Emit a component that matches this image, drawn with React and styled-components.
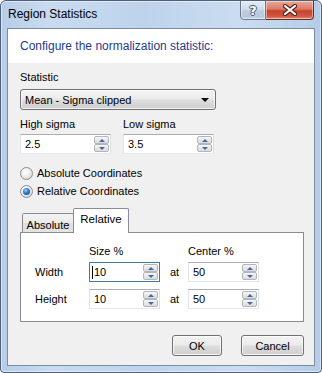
import React from 'react';
import styled, { createGlobalStyle, css } from 'styled-components';

const GlobalStyle = createGlobalStyle`
  html, body {
    margin: 0;
    padding: 0;
  }
  body {
    font-family: "Liberation Sans", Arial, sans-serif;
    font-size: 11px;
    color: #000;
    background: #fff;
  }
  * { box-sizing: border-box; }
`;

const win7Button = css`
  border: 1px solid #707070;
  border-radius: 3px;
  background: linear-gradient(to bottom, #f2f2f2 0%, #ebebeb 48%, #dddddd 52%, #cfcfcf 100%);
  box-shadow: inset 0 0 0 1px rgba(255, 255, 255, 0.75);
`;

let Window = styled.div`
  width: 322px;
  height: 373px;
  border: 1px solid #50607a;
  border-radius: 6px 6px 4px 4px;
  background: linear-gradient(to right, #b7cde7 0%, #c8dbf0 15%, #bed3eb 45%, #cadcf1 75%, #b6cce6 100%);
  box-shadow: inset 0 0 0 1px rgba(255, 255, 255, 0.5);
  padding: 0 6px 6px;
  display: flex;
  flex-direction: column;
  overflow: hidden;
`;

let TitleBar = styled.div`
  height: 27px;
  display: flex;
  align-items: flex-start;
  justify-content: space-between;
`;

let Title = styled.div`
  padding-left: 1px;
  line-height: 27px;
  font-size: 12px;
  color: #000;
`;

let CaptionButtons = styled.div`
  display: flex;
  margin-top: -1px;
  margin-right: 1px;
`;

let CaptionButton = styled.div`
  height: 20px;
  width: ${p => p.$wide ? 48 : 26}px;
  display: flex;
  align-items: center;
  justify-content: center;
  border: 1px solid ${p => p.$danger ? '#6e2b22' : '#6a7889'};
  border-left-width: ${p => p.$danger ? 0 : 1}px;
  border-radius: ${p => p.$danger ? '0 0 4px 0' : '0 0 0 4px'};
  background: ${p => p.$danger
    ? 'linear-gradient(to bottom, #e9a999 0%, #da7a66 45%, #c7412c 55%, #cf5a43 85%, #e0937e 100%)'
    : 'linear-gradient(to bottom, #e3ecf6 0%, #d0dded 45%, #bccde2 55%, #b7c9de 85%, #cbd9ea 100%)'};
  box-shadow: inset 0 0 0 1px rgba(255, 255, 255, 0.45);
`;

let HelpGlyph = styled.span`
  font-family: "DejaVu Sans", sans-serif;
  font-weight: bold;
  font-size: 13px;
  color: #fff;
  line-height: 1;
  text-shadow: 1px 0 0 #4a5668, -1px 0 0 #4a5668, 0 1px 0 #4a5668, 0 -1px 0 #4a5668;
`;

let Client = styled.div`
  flex: 1;
  display: flex;
  flex-direction: column;
  border: 1px solid #7a8da5;
  background: #f0f0f0;
`;

let Header = styled.div`
  height: 34px;
  background: #fff;
  display: flex;
  align-items: center;
  padding-left: 12px;
  font-size: 12px;
  color: #1e3a8f;
`;

let Body = styled.div`
  flex: 1;
  display: flex;
  flex-direction: column;
  padding: 8px 10px 0 12px;
`;

let Label = styled.div`
  line-height: 13px;
  height: 13px;
  align-self: start;
`;

let Combo = styled.div`
  ${win7Button};
  margin-top: 5px;
  width: 196px;
  height: 21px;
  display: flex;
  align-items: center;
  justify-content: space-between;
  padding: 0 6px 0 4px;
`;

let DownArrow = styled.span`
  width: 0;
  height: 0;
  border-left: 4px solid transparent;
  border-right: 4px solid transparent;
  border-top: 4px solid #000;
`;

let FieldRow = styled.div`
  display: flex;
  gap: 12px;
  margin-top: 8px;
`;

let Field = styled.div`
  width: 91px;
  display: flex;
  flex-direction: column;
  gap: 3px;
`;

let SpinBox = styled.div`
  width: ${p => p.$width || 91}px;
  height: 20px;
  display: flex;
  align-items: stretch;
  background: #fff;
  border: 1px solid;
  border-color: ${p => p.$focused ? '#3d7bad' : '#abadb3 #dbdfe6 #e3e9ef #e2e3ea'};
  padding: 1px;
`;

let SpinText = styled.div`
  flex: 1;
  display: flex;
  align-items: center;
  padding-left: ${p => p.$caret ? 1 : 3}px;
  line-height: 1;
`;

let Caret = styled.span`
  display: inline-block;
  width: 1px;
  height: 13px;
  background: #000;
  margin-right: 1px;
`;

let SpinButtons = styled.div`
  width: 15px;
  display: flex;
  flex-direction: column;
`;

let SpinButton = styled.div`
  flex: 1;
  display: flex;
  align-items: center;
  justify-content: center;
  border: 1px solid #b2b5ba;
  border-radius: 2px;
  background: linear-gradient(to bottom, #f7f7f7 0%, #e8e8e8 50%, #dcdcdc 100%);
`;

let SpinArrow = styled.span`
  width: 0;
  height: 0;
  border-left: 3px solid transparent;
  border-right: 3px solid transparent;
  ${p => p.$down
    ? css`border-top: 3px solid #4467a8;`
    : css`border-bottom: 3px solid #4467a8;`}
`;

let RadioGroup = styled.div`
  display: flex;
  flex-direction: column;
  margin-top: 10px;
`;

let RadioRow = styled.div`
  height: 18px;
  display: flex;
  align-items: center;
  gap: 4px;
`;

let RadioCircle = styled.span`
  width: 13px;
  height: 13px;
  border-radius: 50%;
  border: 1px solid #8b8e92;
  background: radial-gradient(circle at 40% 35%, #ffffff 0%, #eeeeee 45%, #c9c9c9 100%);
  display: flex;
  align-items: center;
  justify-content: center;
  ${p => p.$checked && css`
    &::after {
      content: '';
      width: 7px;
      height: 7px;
      border-radius: 50%;
      background: radial-gradient(circle at 40% 35%, #a5d4ff 0%, #3c8ad6 35%, #194d8f 80%, #0f3466 100%);
    }
  `}
`;

let TabBar = styled.div`
  display: flex;
  align-items: flex-end;
  height: 24px;
  margin-top: 8px;
  padding-left: 2px;
  position: relative;
  z-index: 1;
`;

let Tab = styled.div`
  border: 1px solid #898c95;
  border-bottom: none;
  border-radius: 2px 2px 0 0;
  display: flex;
  justify-content: center;
  ${p => p.$active
    ? css`
      height: 25px;
      width: 56px;
      margin-bottom: -1px;
      margin-left: -1px;
      background: #fff;
      align-items: center;
      padding-bottom: 4px;
      font-size: 11.5px;
    `
    : css`
      height: 19px;
      width: 52px;
      align-items: center;
      padding-top: 3px;
      background: linear-gradient(to bottom, #f3f3f3 0%, #ebebeb 50%, #dedede 51%, #e4e4e4 100%);
    `}
`;

let Panel = styled.div`
  height: 90px;
  border: 1px solid #898c95;
  background: #fff;
  padding: 12px 0 0 14px;
`;

// header row is 10px so the 13px labels overhang into the gap above the spins
let CoordGrid = styled.div`
  display: grid;
  grid-template-columns: 54px 71px 28px 71px;
  grid-template-rows: 10px 20px 20px;
  row-gap: 7px;
  align-items: center;
`;

let AtLabel = styled.span`
  padding-left: 10px;
`;

let ButtonRow = styled.div`
  display: flex;
  justify-content: flex-end;
  gap: 19px;
  margin-top: 13px;
`;

let PushButton = styled.button`
  ${win7Button};
  width: ${p => p.$width}px;
  height: 21px;
  font-family: inherit;
  font-size: 11px;
  color: #000;
  padding: 0;
`;

let Spin = ({ value, width, focused }) => (
  <SpinBox $width={width} $focused={focused}>
    <SpinText $caret={focused}>
      {focused && <Caret />}
      {value}
    </SpinText>
    <SpinButtons>
      <SpinButton><SpinArrow /></SpinButton>
      <SpinButton><SpinArrow $down /></SpinButton>
    </SpinButtons>
  </SpinBox>
);

let CloseGlyph = () => (
  <svg width="14" height="12" viewBox="0 0 14 12">
    <path d="M2 2 L12 10 M12 2 L2 10" stroke="#5a1f17" strokeWidth="4.2" strokeLinecap="round" />
    <path d="M2 2 L12 10 M12 2 L2 10" stroke="#fff" strokeWidth="2.2" strokeLinecap="round" />
  </svg>
);

export default function App() {
  return (
    <>
      <GlobalStyle />
      <Window>
        <TitleBar>
          <Title>Region Statistics</Title>
          <CaptionButtons>
            <CaptionButton><HelpGlyph>?</HelpGlyph></CaptionButton>
            <CaptionButton $wide $danger><CloseGlyph /></CaptionButton>
          </CaptionButtons>
        </TitleBar>
        <Client>
          <Header>Configure the normalization statistic:</Header>
          <Body>
            <Label>Statistic</Label>
            <Combo>
              <span>Mean - Sigma clipped</span>
              <DownArrow />
            </Combo>
            <FieldRow>
              <Field>
                <Label>High sigma</Label>
                <Spin value="2.5" />
              </Field>
              <Field>
                <Label>Low sigma</Label>
                <Spin value="3.5" />
              </Field>
            </FieldRow>
            <RadioGroup>
              <RadioRow><RadioCircle />Absolute Coordinates</RadioRow>
              <RadioRow><RadioCircle $checked />Relative Coordinates</RadioRow>
            </RadioGroup>
            <TabBar>
              <Tab>Absolute</Tab>
              <Tab $active>Relative</Tab>
            </TabBar>
            <Panel>
              <CoordGrid>
                <span />
                <Label>Size %</Label>
                <span />
                <Label>Center %</Label>
                <span>Width</span>
                <Spin value="10" width={71} focused />
                <AtLabel>at</AtLabel>
                <Spin value="50" width={71} />
                <span>Height</span>
                <Spin value="10" width={71} />
                <AtLabel>at</AtLabel>
                <Spin value="50" width={71} />
              </CoordGrid>
            </Panel>
            <ButtonRow>
              <PushButton $width={50}>OK</PushButton>
              <PushButton $width={63}>Cancel</PushButton>
            </ButtonRow>
          </Body>
        </Client>
      </Window>
    </>
  );
}
